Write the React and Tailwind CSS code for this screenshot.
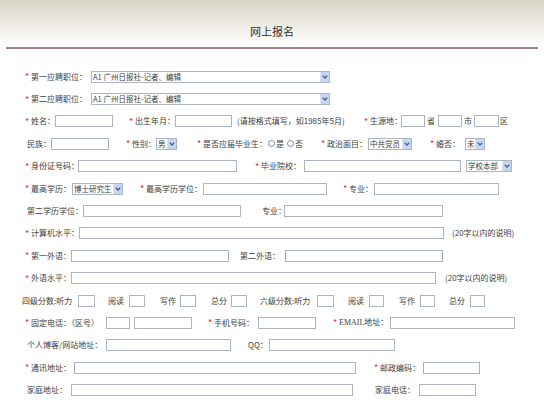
import React from 'react';

const Star = ({ cls = '' }) => (
  <span className={'shrink-0 w-[6px] text-[#e02a2a] text-[9px] leading-none ' + cls}>*</span>
);

const L = ({ cls = '', children }) => (
  <span className={'shrink-0 whitespace-nowrap leading-none ' + cls}>{children}</span>
);

const Box = ({ cls = '' }) => (
  <div className={'shrink-0 h-[12px] border border-[#a9b5c1] bg-white ' + cls} />
);

const Chevron = () => (
  <svg width="6" height="4" viewBox="0 0 6 4">
    <path d="M0.8 0.8 L3 3 L5.2 0.8" fill="none" stroke="#4a5f8a" strokeWidth="1.3" />
  </svg>
);

const Sel = ({ cls = '', text }) => (
  <div className={'shrink-0 h-[12px] flex items-stretch border border-[#a9b5c1] bg-white ' + cls}>
    <span className="flex-1 min-w-0 pl-[1px] text-[7.5px] leading-[10px] whitespace-nowrap">{text}</span>
    <span className="shrink-0 w-[9px] bg-[#c8d5f2] flex items-center justify-center border-l border-[#dbe4f7]">
      <Chevron />
    </span>
  </div>
);

const Radio = ({ cls = '' }) => (
  <span className={'shrink-0 w-[7px] h-[7px] rounded-full border border-[#7f8a96] bg-white ' + cls} />
);

const Row = ({ children }) => <div className="flex items-center h-[22.4px]">{children}</div>;

export default function App() {
  return (
    <div className="w-[544px] h-[400px] bg-white overflow-hidden text-[8px] text-[#3d3d3d] font-['Noto_Sans_CJK_SC','Noto_Sans',sans-serif]">
      {/* header */}
      <div className="h-[47px] bg-gradient-to-b from-[#d9d5c8] via-[#eeebe3] to-white flex justify-center pt-[24px]">
        <span className="text-[11px] leading-[14px] text-[#333]">网上报名</span>
      </div>
      <div className="h-[2px] mx-[6px] bg-[#a88282]" />

      <div className="mt-[16.5px]">
        <Row>
          <Star cls="ml-[25px]" />
          <L cls="w-[60px]">第一应聘职位：</L>
          <Sel cls="w-[239px]" text="A1 广州日报社-记者、编辑" />
        </Row>
        <Row>
          <Star cls="ml-[25px]" />
          <L cls="w-[60px]">第二应聘职位：</L>
          <Sel cls="w-[239px]" text="A1 广州日报社-记者、编辑" />
        </Row>
        <Row>
          <Star cls="ml-[25px]" />
          <L cls="w-[24px]">姓名：</L>
          <Box cls="w-[58px]" />
          <Star cls="ml-[16px]" />
          <L cls="w-[40px]">出生年月：</L>
          <Box cls="w-[57px]" />
          <L cls="ml-[5px] w-[106px]">(请按格式填写，如1985年5月)</L>
          <Star cls="ml-[21px]" />
          <L cls="w-[31px]">生源地：</L>
          <Box cls="w-[24px]" />
          <L cls="ml-[2px] w-[11px]">省</L>
          <Box cls="w-[24px]" />
          <L cls="ml-[2px] w-[10px]">市</L>
          <Box cls="w-[25px]" />
          <L cls="ml-[1px]">区</L>
        </Row>
        <Row>
          <L cls="ml-[27px] w-[24px]">民族：</L>
          <Box cls="w-[58px]" />
          <Star cls="ml-[17px]" />
          <L cls="w-[24px]">性别：</L>
          <Sel cls="w-[21px]" text="男" />
          <Star cls="ml-[20px]" />
          <L cls="w-[64px]">是否应届毕业生：</L>
          <Radio cls="ml-[1px]" />
          <L cls="ml-[1px] w-[11px]">是</L>
          <Radio />
          <L cls="ml-[1px] w-[8px]">否</L>
          <Star cls="ml-[18px]" />
          <L cls="w-[41px]">政治面目：</L>
          <Sel cls="w-[44px]" text="中共党员" />
          <Star cls="ml-[18px]" />
          <L cls="w-[29px]">婚否：</L>
          <Sel cls="w-[20px]" text="未" />
        </Row>
        <Row>
          <Star cls="ml-[25px]" />
          <L cls="w-[47px]">身份证号码：</L>
          <Box cls="w-[159px]" />
          <Star cls="ml-[18px]" />
          <L cls="w-[43px]">毕业院校：</L>
          <Box cls="w-[157px]" />
          <Sel cls="ml-[5px] w-[46px]" text="学校本部" />
        </Row>
        <Row>
          <Star cls="ml-[25px]" />
          <L cls="w-[41px]">最高学历：</L>
          <Sel cls="w-[51px]" text="博士研究生" />
          <Star cls="ml-[17px]" />
          <L cls="w-[57px]">最高学历学位：</L>
          <Box cls="w-[124px]" />
          <Star cls="ml-[16px]" />
          <L cls="w-[25px]">专业：</L>
          <Box cls="w-[125px]" />
        </Row>
        <Row>
          <L cls="ml-[27px] w-[56px]">第二学历学位：</L>
          <Box cls="w-[158px]" />
          <L cls="ml-[21px] w-[22px]">专业：</L>
          <Box cls="w-[159px]" />
        </Row>
        <Row>
          <Star cls="ml-[25px]" />
          <L cls="w-[48px]">计算机水平：</L>
          <Box cls="w-[365px]" />
          <L cls="ml-[8px]">(20字以内的说明)</L>
        </Row>
        <Row>
          <Star cls="ml-[25px]" />
          <L cls="w-[40px]">第一外语：</L>
          <Box cls="w-[158px]" />
          <L cls="ml-[11px] w-[45px]">第二外语：</L>
          <Box cls="w-[158px]" />
        </Row>
        <Row>
          <Star cls="ml-[25px]" />
          <L cls="w-[40px]">外语水平：</L>
          <Box cls="w-[365px]" />
          <L cls="ml-[9px]">(20字以内的说明)</L>
        </Row>
        <Row>
          <L cls="ml-[22px] w-[56px]">四级分数:听力</L>
          <Box cls="w-[17px]" />
          <L cls="ml-[13px] w-[21px]">阅读</L>
          <Box cls="w-[16px]" />
          <L cls="ml-[15px] w-[20px]">写作</L>
          <Box cls="w-[16px]" />
          <L cls="ml-[15px] w-[20px]">总分</L>
          <Box cls="w-[16px]" />
          <L cls="ml-[13px] w-[57px]">六级分数:听力</L>
          <Box cls="w-[17px]" />
          <L cls="ml-[14px] w-[21px]">阅读</L>
          <Box cls="w-[15px]" />
          <L cls="ml-[15px] w-[21px]">写作</L>
          <Box cls="w-[15px]" />
          <L cls="ml-[14px] w-[21px]">总分</L>
          <Box cls="w-[15px]" />
        </Row>
        <Row>
          <Star cls="ml-[25px]" />
          <L cls="w-[75px]">固定电话：（区号）</L>
          <Box cls="w-[24px]" />
          <Box cls="ml-[4px] w-[58px]" />
          <Star cls="ml-[16px]" />
          <L cls="w-[44px]">手机号码：</L>
          <Box cls="w-[58px]" />
          <Star cls="ml-[17px]" />
          <L cls="w-[51px]">
            <span className="font-['Liberation_Serif',serif]">EMAIL</span>地址：
          </L>
          <Box cls="w-[125px]" />
        </Row>
        <Row>
          <L cls="ml-[27px] w-[79px]">个人博客/网站地址：</L>
          <Box cls="w-[125px]" />
          <L cls="ml-[17px] w-[21px]">QQ：</L>
          <Box cls="w-[126px]" />
        </Row>
        <Row>
          <Star cls="ml-[25px]" />
          <L cls="w-[43px]">通讯地址：</L>
          <Box cls="w-[282px]" />
          <Star cls="ml-[18px]" />
          <L cls="w-[43px]">邮政编码：</L>
          <Box cls="w-[57px]" />
        </Row>
        <Row>
          <L cls="ml-[27px] w-[44px]">家庭地址：</L>
          <Box cls="w-[282px]" />
          <L cls="ml-[22px] w-[44px]">家庭电话：</L>
          <Box cls="w-[57px]" />
        </Row>
      </div>
    </div>
  );
}
